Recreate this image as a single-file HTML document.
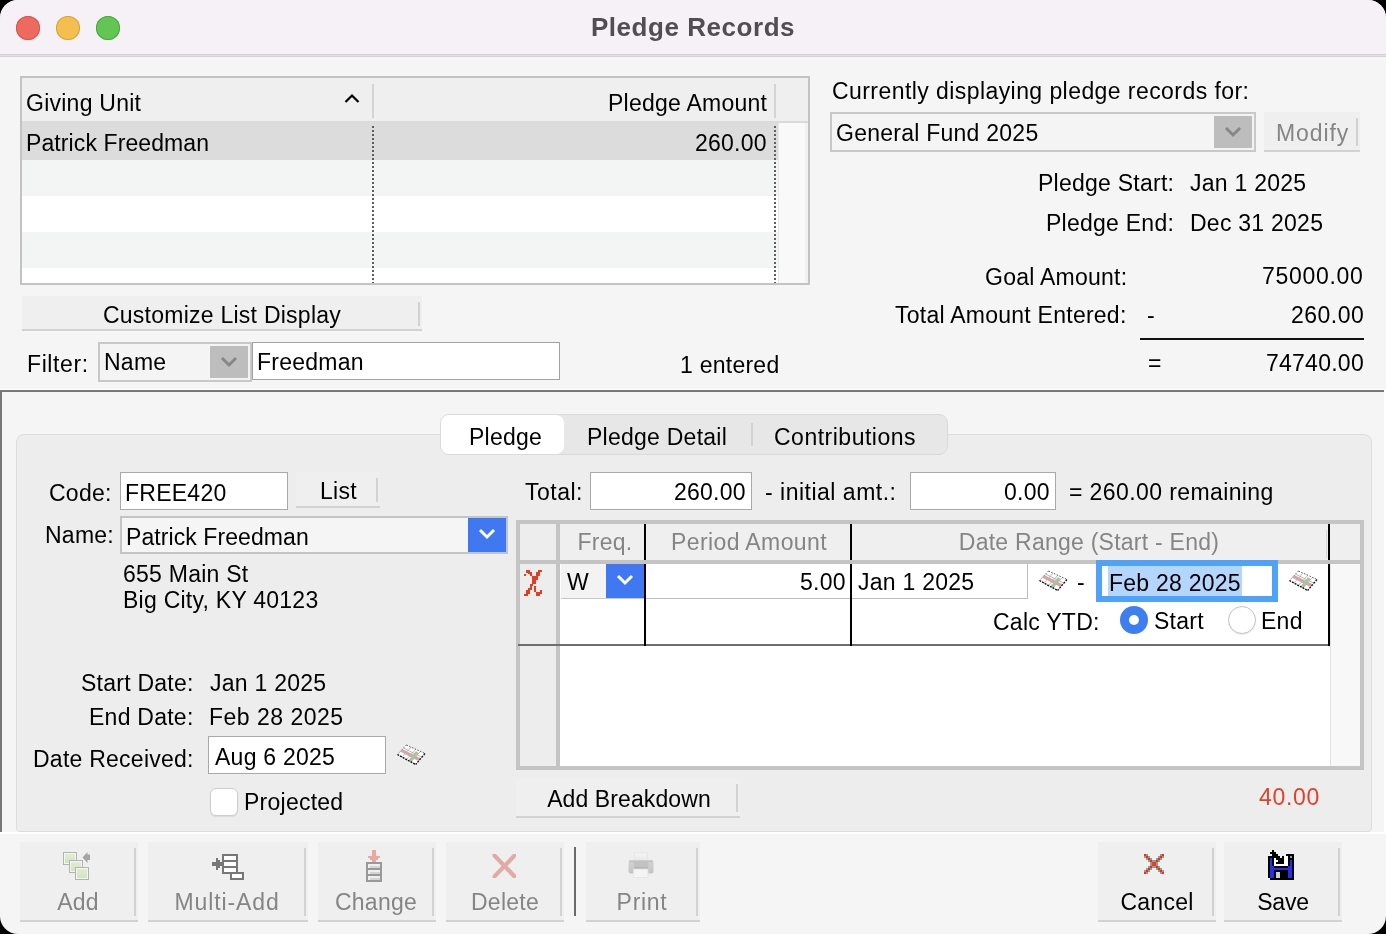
<!DOCTYPE html>
<html><head><meta charset="utf-8">
<style>
html,body{margin:0;padding:0;background:#000;}
body{width:1386px;height:934px;overflow:hidden;position:relative;}
#win{position:absolute;left:0;top:0;width:1386px;height:934px;border-radius:18px;overflow:hidden;background:#f5f5f5;}
.a{position:absolute;box-sizing:border-box;}
.t{position:absolute;font:23px/21px "Liberation Sans",sans-serif;letter-spacing:0.25px;white-space:nowrap;color:#000;will-change:transform;}
.r{text-align:right;}
.c{text-align:center;}
.g{color:#858585;}
.btn{position:absolute;box-sizing:border-box;background:#efefef;border-bottom:2px solid #d2d2d2;}
.btn .ln{position:absolute;right:2px;width:2px;background:#d2d2d2;}
.inp{position:absolute;box-sizing:border-box;background:#fff;border:1px solid #a9a9a9;}
</style></head>
<body>
<div id="win">
  <!-- title bar -->
  <div class="a" style="left:0;top:0;width:1386px;height:54px;background:#f6f1f7;"></div>
  <div class="a" style="left:0;top:54px;width:1386px;height:1px;background:#d3ced4;"></div><div class="a" style="left:0;top:55px;width:1386px;height:1px;background:#e4e0e5;"></div><div class="a" style="left:0;top:56px;width:1386px;height:1px;background:#d4d4d4;"></div>
  <div class="a" style="left:16px;top:16px;width:24px;height:24px;border-radius:50%;background:#ee6a5f;box-shadow:inset 0 0 0 1px #d8554a;"></div>
  <div class="a" style="left:56px;top:16px;width:24px;height:24px;border-radius:50%;background:#f5bf4f;box-shadow:inset 0 0 0 1px #d9a23a;"></div>
  <div class="a" style="left:96px;top:16px;width:24px;height:24px;border-radius:50%;background:#62c655;box-shadow:inset 0 0 0 1px #4aa83e;"></div>
  <div class="t c" style="left:493px;width:400px;top:14px;font:bold 26px/26px 'Liberation Sans',sans-serif;letter-spacing:0.55px;color:#504e50;">Pledge Records</div>

  <!-- top list -->
  <div class="a" style="left:20px;top:76px;width:790px;height:209px;border:2px solid #c3c3c3;background:#fff;"></div>
  <div class="a" style="left:22px;top:78px;width:786px;height:44px;background:#efefef;"></div>
  <div class="a" style="left:22px;top:121px;width:786px;height:2px;background:#dadada;"></div>
  <div class="a" style="left:22px;top:123px;width:756px;height:37px;background:#dcdcdc;"></div>
  <div class="a" style="left:22px;top:160px;width:756px;height:36px;background:#f3f4f4;"></div>
  <div class="a" style="left:22px;top:232px;width:756px;height:36px;background:#f3f4f4;"></div>
  <div class="a" style="left:778px;top:123px;width:30px;height:160px;background:#f9f9f9;border-left:1px solid #e8e8e8;"></div><div class="a" style="left:805px;top:123px;width:3px;height:160px;background:#f1f1f1;"></div>
  <div class="a" style="left:372px;top:84px;width:2px;height:34px;background:#d4d4d4;"></div>
  <div class="a" style="left:774px;top:84px;width:2px;height:34px;background:#d4d4d4;"></div>
  <div class="a" style="left:372px;top:126px;width:2px;height:157px;background:repeating-linear-gradient(to bottom,#5e5e5e 0 2px,transparent 2px 4px);"></div>
  <div class="a" style="left:774px;top:126px;width:2px;height:157px;background:repeating-linear-gradient(to bottom,#5e5e5e 0 2px,transparent 2px 4px);"></div>
  <svg class="a" style="left:343px;top:92px" width="18" height="12"><polyline points="2.5,10 9,3.5 15.5,10" fill="none" stroke="#000" stroke-width="2.2"/></svg>
  <div class="t" style="left:26px;top:93px;">Giving Unit</div>
  <div class="t r" style="right:619px;top:93px;">Pledge Amount</div>
  <div class="t" style="left:25.5px;top:133px;letter-spacing:0.1px;">Patrick Freedman</div>
  <div class="t r" style="right:619px;top:133px;">260.00</div>

  <!-- customize button -->
  <div class="btn" style="left:22px;top:296px;width:400px;height:35px;"><div class="ln" style="top:6px;height:24px;"></div></div>
  <div class="t c" style="left:22px;width:400px;top:305px;">Customize List Display</div>

  <!-- filter -->
  <div class="t" style="left:27px;top:354px;letter-spacing:0.6px;">Filter:</div>
  <div class="a" style="left:98px;top:342px;width:154px;height:40px;border:2px solid #c8c8c8;background:#f4f4f4;"></div>
  <div class="a" style="left:210px;top:346px;width:38px;height:32px;background:#bdbdbd;"></div>
  <svg class="a" style="left:219px;top:355px" width="20" height="14"><polyline points="3,3 10,10 17,3" fill="none" stroke="#878787" stroke-width="3"/></svg>
  <div class="t" style="left:104px;top:352px;">Name</div>
  <div class="inp" style="left:252px;top:342px;width:308px;height:38px;border:1px solid #a2a2a2;"></div>
  <div class="t" style="left:257px;top:352px;">Freedman</div>
  <div class="t" style="left:680px;top:355px;">1 entered</div>

  <!-- right top -->
  <div class="t" style="left:832px;top:81px;letter-spacing:0.43px;">Currently displaying pledge records for:</div>
  <div class="a" style="left:830px;top:112px;width:426px;height:40px;border:2px solid #c8c8c8;background:#f4f4f4;"></div>
  <div class="a" style="left:1214px;top:116px;width:38px;height:32px;background:#bdbdbd;"></div>
  <svg class="a" style="left:1223px;top:125px" width="20" height="14"><polyline points="3,3 10,10 17,3" fill="none" stroke="#878787" stroke-width="3"/></svg>
  <div class="t" style="left:836px;top:123px;">General Fund 2025</div>
  <div class="btn" style="left:1264px;top:112px;width:96px;height:40px;"><div class="ln" style="top:6px;height:28px;"></div></div>
  <div class="t g" style="left:1276px;top:123px;letter-spacing:0.9px;">Modify</div>
  <div class="t r" style="right:212px;top:173px;">Pledge Start:</div>
  <div class="t" style="left:1190px;top:173px;">Jan 1 2025</div>
  <div class="t r" style="right:212px;top:213px;">Pledge End:</div>
  <div class="t" style="left:1189.5px;top:213px;">Dec 31 2025</div>
  <div class="t r" style="right:259px;top:267px;">Goal Amount:</div>
  <div class="t r" style="right:22px;top:266px;letter-spacing:0.7px;">75000.00</div>
  <div class="t r" style="right:259px;top:305px;">Total Amount Entered:</div>
  <div class="t" style="left:1147px;top:305px;">-</div>
  <div class="t r" style="right:22px;top:305px;letter-spacing:0.5px;">260.00</div>
  <div class="a" style="left:1140px;top:338px;width:224px;height:2px;background:#111;"></div>
  <div class="t" style="left:1148px;top:353px;">=</div>
  <div class="t r" style="right:22px;top:353px;">74740.00</div>

  <!-- lower sunken frame -->
  <div class="a" style="left:0;top:389px;width:1386px;height:1px;background:#fff;"></div>
  <div class="a" style="left:0;top:390px;width:1384px;height:2px;background:#777;"></div>
  <div class="a" style="left:0;top:390px;width:2px;height:442px;background:#777;"></div>
  <div class="a" style="left:0;top:832px;width:1386px;height:2px;background:#fff;"></div>
  <div class="a" style="left:1384px;top:390px;width:2px;height:444px;background:#fff;"></div>

  <!-- panel -->
  <div class="a" style="left:16px;top:434px;width:1356px;height:398px;background:#ededed;border:1px solid #dcdcdc;border-radius:8px 8px 4px 4px;"></div>

  <!-- segmented -->
  <div class="a" style="left:440px;top:414px;width:508px;height:41px;background:#e7e7e7;border:1px solid #dadada;border-radius:9px;"></div>
  <div class="a" style="left:441px;top:415px;width:123px;height:39px;background:#fff;border-radius:8px;"></div>
  <div class="a" style="left:751px;top:423px;width:2px;height:23px;background:#d2d2d2;"></div>
  <div class="t" style="left:469px;top:427px;">Pledge</div>
  <div class="t" style="left:586.5px;top:427px;">Pledge Detail</div>
  <div class="t" style="left:774px;top:427px;letter-spacing:0.5px;">Contributions</div>

  <!-- left fields -->
  <div class="t r" style="right:1274px;top:483px;">Code:</div>
  <div class="inp" style="left:120px;top:472px;width:168px;height:38px;"></div>
  <div class="t" style="left:125px;top:483px;">FREE420</div>
  <div class="btn" style="left:296px;top:472px;width:84px;height:36px;"><div class="ln" style="top:6px;height:24px;"></div></div>
  <div class="t" style="left:319.5px;top:481px;">List</div>
  <div class="t r" style="right:1272px;top:525px;">Name:</div>
  <div class="a" style="left:120px;top:516px;width:388px;height:38px;border:2px solid #c4c4c4;background:#f5f5f5;"></div>
  <div class="a" style="left:468px;top:518px;width:38px;height:34px;background:#3f78f0;"></div>
  <svg class="a" style="left:477px;top:527px" width="20" height="14"><polyline points="3,3 10,10 17,3" fill="none" stroke="#fff" stroke-width="3"/></svg>
  <div class="t" style="left:125.5px;top:527px;letter-spacing:0.08px;">Patrick Freedman</div>
  <div class="t" style="left:122.5px;top:564px;">655 Main St</div>
  <div class="t" style="left:122.5px;top:590px;">Big City, KY 40123</div>

  <div class="t r" style="right:1192px;top:673px;">Start Date:</div>
  <div class="t" style="left:209.5px;top:673px;">Jan 1 2025</div>
  <div class="t r" style="right:1192px;top:707px;">End Date:</div>
  <div class="t" style="left:208.5px;top:707px;letter-spacing:0.5px;">Feb 28 2025</div>
  <div class="t r" style="right:1192px;top:749px;">Date Received:</div>
  <div class="inp" style="left:208px;top:736px;width:178px;height:38px;"></div>
  <div class="t" style="left:215px;top:747px;">Aug 6 2025</div>
  <div class="a" id="cal1" style="left:397px;top:744px;width:28px;height:20px;"></div>
  <div class="a" style="left:210px;top:788px;width:28px;height:28px;border-radius:6px;background:#fff;border:1px solid #cdcdcd;box-shadow:0 1px 1px rgba(0,0,0,0.08);"></div>
  <div class="t" style="left:244px;top:792px;">Projected</div>

  <!-- total row -->
  <div class="t" style="left:525px;top:482px;letter-spacing:0.5px;">Total:</div>
  <div class="inp" style="left:590px;top:472px;width:162px;height:38px;"></div>
  <div class="t r" style="right:640px;top:482px;">260.00</div>
  <div class="t" style="left:764.5px;top:482px;letter-spacing:0.5px;">- initial amt.:</div>
  <div class="inp" style="left:910px;top:472px;width:146px;height:38px;"></div>
  <div class="t r" style="right:336px;top:482px;">0.00</div>
  <div class="t" style="left:1069px;top:482px;letter-spacing:0.4px;">= 260.00 remaining</div>

  <!-- grid -->
  <div class="a" style="left:516px;top:520px;width:848px;height:250px;border:4px solid #c4c4c4;background:#fff;"></div>
  <div class="a" style="left:520px;top:524px;width:36px;height:242px;background:#ededed;"></div>
  <div class="a" style="left:556px;top:524px;width:4px;height:242px;background:#c4c4c4;"></div>
  <div class="a" style="left:560px;top:524px;width:800px;height:36px;background:#efefef;"></div>
  
  <div class="a" style="left:1330px;top:564px;width:30px;height:202px;background:#f8f8f8;border-left:1px solid #e2e2e2;"></div>
  <div class="a" style="left:1326px;top:530px;width:1px;height:28px;background:#d8d8d8;"></div>
  <div class="a" style="left:518px;top:644px;width:812px;height:2px;background:#6e6e6e;"></div>
  <div class="a" style="left:644px;top:524px;width:2px;height:122px;background:#000;"></div>
  <div class="a" style="left:850px;top:524px;width:2px;height:122px;background:#000;"></div>
  <div class="a" style="left:1328px;top:524px;width:2px;height:122px;background:#000;"></div>
  <div class="a" style="left:520px;top:560px;width:840px;height:4px;background:#c4c4c4;"></div>
  <div class="t c g" style="left:562.6px;width:84px;top:532px;">Freq.</div>
  <div class="t c g" style="left:646.8px;width:204px;top:532px;letter-spacing:0.4px;">Period Amount</div>
  <div class="t c g" style="left:851px;width:476px;top:532px;">Date Range (Start - End)</div>

  <div class="a" style="left:561px;top:564px;width:83px;height:35px;background:#f3f3f3;border-bottom:1px solid #c8c8c8;"></div>
  <div class="a" style="left:606px;top:564px;width:38px;height:34px;background:#3f78f0;"></div>
  <svg class="a" style="left:615px;top:573px" width="20" height="14"><polyline points="3,3 10,10 17,3" fill="none" stroke="#fff" stroke-width="3"/></svg>
  <div class="t" style="left:567px;top:572px;">W</div>
  <div class="a" style="left:646px;top:564px;width:204px;height:35px;border-bottom:1px solid #bdbdbd;"></div>
  <div class="t r" style="right:540px;top:572px;">5.00</div>
  <div class="a" style="left:852px;top:564px;width:176px;height:35px;border-bottom:1px solid #bdbdbd;border-right:1px solid #bdbdbd;"></div>
  <div class="t" style="left:857.5px;top:572px;">Jan 1 2025</div>
  <div class="a" id="cal2" style="left:1039px;top:571px;width:28px;height:20px;"></div>
  <div class="t" style="left:1077px;top:572px;">-</div>
  <div class="a" style="left:1096px;top:560px;width:182px;height:42px;border:6px solid #4fa2f7;background:#fff;"></div>
  <div class="a" style="left:1108px;top:566px;width:134px;height:30px;background:#b4d6fd;"></div>
  <div class="t" style="left:1109px;top:573px;">Feb 28 2025</div>
  <div class="a" id="cal3" style="left:1289px;top:571px;width:28px;height:20px;"></div>
  <div class="t r" style="right:286px;top:612px;">Calc YTD:</div>
  <div class="a" style="left:1120px;top:606px;width:28px;height:28px;border-radius:50%;background:#3d7ff0;"></div>
  <div class="a" style="left:1129px;top:615px;width:10px;height:10px;border-radius:50%;background:#fff;"></div>
  <div class="t" style="left:1154px;top:611px;">Start</div>
  <div class="a" style="left:1228px;top:606px;width:28px;height:28px;border-radius:50%;background:#fff;border:1px solid #c4c4c4;box-shadow:0 1px 1px rgba(0,0,0,0.08);"></div>
  <div class="t" style="left:1261px;top:611px;">End</div>

  <!-- add breakdown -->
  <div class="btn" style="left:516px;top:778px;width:224px;height:40px;"><div class="ln" style="top:6px;height:28px;"></div></div>
  <div class="t c" style="left:516.8px;width:224px;top:789px;letter-spacing:0.1px;">Add Breakdown</div>
  <div class="t" style="left:1258.5px;top:787px;color:#e2402a;letter-spacing:0.7px;">40.00</div>

  <!-- bottom toolbar -->
  <div class="btn" style="left:20px;top:842px;width:118px;height:80px;"><div class="ln" style="top:6px;height:68px;"></div></div>
  <div class="t c g" style="left:20px;width:116px;top:892px;">Add</div>
  <div class="btn" style="left:148px;top:842px;width:160px;height:80px;"><div class="ln" style="top:6px;height:68px;"></div></div>
  <div class="t c g" style="left:148px;width:158px;top:892px;letter-spacing:0.9px;">Multi-Add</div>
  <div class="btn" style="left:318px;top:842px;width:118px;height:80px;"><div class="ln" style="top:6px;height:68px;"></div></div>
  <div class="t c g" style="left:318px;width:116px;top:892px;">Change</div>
  <div class="btn" style="left:446px;top:842px;width:118px;height:80px;"><div class="ln" style="top:6px;height:68px;"></div></div>
  <div class="t c g" style="left:446px;width:118px;top:892px;">Delete</div>
  <div class="a" style="left:574px;top:847px;width:2px;height:69px;background:#6a6a6a;"></div>
  <div class="btn" style="left:586px;top:842px;width:114px;height:80px;"><div class="ln" style="top:6px;height:68px;"></div></div>
  <div class="t c g" style="left:586px;width:112px;top:892px;letter-spacing:0.7px;">Print</div>
  <div class="btn" style="left:1098px;top:842px;width:118px;height:80px;"><div class="ln" style="top:6px;height:68px;"></div></div>
  <div class="t c" style="left:1098px;width:118px;top:892px;">Cancel</div>
  <div class="btn" style="left:1224px;top:842px;width:118px;height:80px;"><div class="ln" style="top:6px;height:68px;"></div></div>
  <div class="t c" style="left:1224px;width:118px;top:892px;letter-spacing:-0.2px;">Save</div>
<!--ICONS--><svg class="a" style="left:0;top:0;pointer-events:none" width="1386" height="934" viewBox="0 0 1386 934">
<g fill="#e63b22" shape-rendering="crispEdges"><rect x="524" y="574" width="2" height="2"/><rect x="526" y="570" width="4" height="3"/><rect x="528" y="572" width="4" height="2"/><rect x="530" y="572" width="2" height="4"/><rect x="538" y="570" width="4" height="2"/><rect x="536" y="572" width="4" height="4"/><rect x="532" y="576" width="6" height="4"/><rect x="532" y="580" width="4" height="4"/><rect x="530" y="584" width="3" height="2"/><rect x="530" y="584" width="2" height="6"/><rect x="528" y="588" width="4" height="2"/><rect x="526" y="590" width="4" height="4"/><rect x="524" y="594" width="4" height="2"/><rect x="534" y="586" width="2" height="6"/><rect x="536" y="592" width="4" height="4"/><rect x="540" y="590" width="2" height="4"/></g>
<polygon points="1039.4,580.5 1048.5,571 1067,579.5 1057.6,590.5" fill="#fff"/><line x1="1053.12" y1="573.12" x2="1043.95" y2="583.00" stroke="#aaa" stroke-width="0.8"/><line x1="1057.75" y1="575.25" x2="1048.50" y2="585.50" stroke="#aaa" stroke-width="0.8"/><line x1="1062.38" y1="577.38" x2="1053.05" y2="588.00" stroke="#aaa" stroke-width="0.8"/><line x1="1045.50" y1="574.13" x2="1063.90" y2="583.13" stroke="#aaa" stroke-width="0.8"/><line x1="1042.49" y1="577.27" x2="1060.80" y2="586.76" stroke="#aaa" stroke-width="0.8"/><line x1="1043.50" y1="576.23" x2="1061.83" y2="585.55" stroke="#dba3a5" stroke-width="3"/><line x1="1059.20" y1="578.00" x2="1051.80" y2="587.00" stroke="#a6c69c" stroke-width="3"/><line x1="1039.40" y1="580.50" x2="1057.60" y2="590.50" stroke="#111" stroke-width="1.4" stroke-dasharray="2 1"/><line x1="1067.00" y1="579.50" x2="1057.60" y2="590.50" stroke="#111" stroke-width="1.3" stroke-dasharray="2 1.2"/><line x1="1048.50" y1="571.00" x2="1039.40" y2="580.50" stroke="#666" stroke-width="1" stroke-dasharray="1.5 1.5"/><line x1="1048.50" y1="571.00" x2="1067.00" y2="579.50" stroke="#555" stroke-width="1" stroke-dasharray="1.5 1.5"/><polygon points="1289.4,580.5 1298.5,571 1317,579.5 1307.6,590.5" fill="#fff"/><line x1="1303.12" y1="573.12" x2="1293.95" y2="583.00" stroke="#aaa" stroke-width="0.8"/><line x1="1307.75" y1="575.25" x2="1298.50" y2="585.50" stroke="#aaa" stroke-width="0.8"/><line x1="1312.38" y1="577.38" x2="1303.05" y2="588.00" stroke="#aaa" stroke-width="0.8"/><line x1="1295.50" y1="574.13" x2="1313.90" y2="583.13" stroke="#aaa" stroke-width="0.8"/><line x1="1292.49" y1="577.27" x2="1310.80" y2="586.76" stroke="#aaa" stroke-width="0.8"/><line x1="1293.50" y1="576.23" x2="1311.83" y2="585.55" stroke="#dba3a5" stroke-width="3"/><line x1="1309.20" y1="578.00" x2="1301.80" y2="587.00" stroke="#a6c69c" stroke-width="3"/><line x1="1289.40" y1="580.50" x2="1307.60" y2="590.50" stroke="#111" stroke-width="1.4" stroke-dasharray="2 1"/><line x1="1317.00" y1="579.50" x2="1307.60" y2="590.50" stroke="#111" stroke-width="1.3" stroke-dasharray="2 1.2"/><line x1="1298.50" y1="571.00" x2="1289.40" y2="580.50" stroke="#666" stroke-width="1" stroke-dasharray="1.5 1.5"/><line x1="1298.50" y1="571.00" x2="1317.00" y2="579.50" stroke="#555" stroke-width="1" stroke-dasharray="1.5 1.5"/><polygon points="397.4,754.5 406.5,745 425,753.5 415.6,764.5" fill="#fff"/><line x1="411.12" y1="747.12" x2="401.95" y2="757.00" stroke="#aaa" stroke-width="0.8"/><line x1="415.75" y1="749.25" x2="406.50" y2="759.50" stroke="#aaa" stroke-width="0.8"/><line x1="420.38" y1="751.38" x2="411.05" y2="762.00" stroke="#aaa" stroke-width="0.8"/><line x1="403.50" y1="748.13" x2="421.90" y2="757.13" stroke="#aaa" stroke-width="0.8"/><line x1="400.49" y1="751.27" x2="418.80" y2="760.76" stroke="#aaa" stroke-width="0.8"/><line x1="401.50" y1="750.23" x2="419.83" y2="759.55" stroke="#dba3a5" stroke-width="3"/><line x1="417.20" y1="752.00" x2="409.80" y2="761.00" stroke="#a6c69c" stroke-width="3"/><line x1="397.40" y1="754.50" x2="415.60" y2="764.50" stroke="#111" stroke-width="1.4" stroke-dasharray="2 1"/><line x1="425.00" y1="753.50" x2="415.60" y2="764.50" stroke="#111" stroke-width="1.3" stroke-dasharray="2 1.2"/><line x1="406.50" y1="745.00" x2="397.40" y2="754.50" stroke="#666" stroke-width="1" stroke-dasharray="1.5 1.5"/><line x1="406.50" y1="745.00" x2="425.00" y2="753.50" stroke="#555" stroke-width="1" stroke-dasharray="1.5 1.5"/>
<defs><linearGradient id="gg" x1="0" y1="0" x2="0" y2="1"><stop offset="0" stop-color="#e2edd3"/><stop offset="1" stop-color="#d3e2c0"/></linearGradient><clipPath id="dclip"><rect x="492.5" y="854" width="23.5" height="24"/></clipPath></defs>
<!-- add icon -->
<rect x="63.5" y="852.5" width="13" height="12" fill="#dde9cc" stroke="#b2b2b2" stroke-width="1"/><rect x="64.5" y="853.5" width="11" height="10" fill="url(#gg)" stroke="#f3f7ec" stroke-width="1"/><rect x="69.5" y="860.5" width="13" height="12" fill="#dde9cc" stroke="#b2b2b2" stroke-width="1"/><rect x="70.5" y="861.5" width="11" height="10" fill="url(#gg)" stroke="#f3f7ec" stroke-width="1"/><rect x="75.5" y="867.5" width="13" height="12" fill="#dde9cc" stroke="#b2b2b2" stroke-width="1"/><rect x="76.5" y="868.5" width="11" height="10" fill="url(#gg)" stroke="#f3f7ec" stroke-width="1"/>
<path d="M82.5,857.5 L87.5,852 L87.5,854.5 L90,854.5 L90,860 L87.5,860 L87.5,863 Z" fill="#a5a5a5"/>
<!-- multi-add -->
<g fill="#fdfdfd" stroke="#777" stroke-width="2" shape-rendering="crispEdges">
<rect x="223" y="855" width="14" height="18"/>
<line x1="223" y1="861" x2="237" y2="861"/>
<line x1="223" y1="867" x2="237" y2="867"/>
<rect x="231" y="873" width="12" height="6"/>
</g>
<path d="M212,862 H216 V858 H218 V860 H220 V862 H222 V866 H220 V868 H218 V870 H216 V866 H212 Z" fill="#777" shape-rendering="crispEdges"/>
<!-- change -->
<path d="M372,850 H376 V856 H380 V858 H378 V860 H376 V862 H372 V860 H370 V858 H368 V856 H372 Z" fill="#eba7a0" shape-rendering="crispEdges"/>
<g fill="none" stroke="#999" stroke-width="2" shape-rendering="crispEdges">
<rect x="367" y="863" width="14" height="18"/>
<line x1="367" y1="869" x2="381" y2="869"/>
<line x1="367" y1="875" x2="381" y2="875"/>
</g>
<g fill="#d4d4d4" shape-rendering="crispEdges">
<rect x="370" y="866" width="10" height="2"/><rect x="370" y="872" width="10" height="2"/><rect x="370" y="878" width="10" height="2"/>
</g>
<!-- delete -->
<g stroke="#e2aaa4" stroke-width="4.2" stroke-linecap="square" clip-path="url(#dclip)">
<line x1="493" y1="854" x2="516" y2="878"/>
<line x1="516" y1="854" x2="493" y2="878"/>
</g>
<!-- print -->
<defs><linearGradient id="pg" x1="0" y1="0" x2="0" y2="1"><stop offset="0" stop-color="#f6f6f6"/><stop offset="1" stop-color="#e6e6e6"/></linearGradient>
<linearGradient id="pb" x1="0" y1="0" x2="0" y2="1"><stop offset="0" stop-color="#d2d2d2"/><stop offset="1" stop-color="#c4c4c4"/></linearGradient></defs>
<rect x="634.5" y="853" width="13" height="8.5" fill="url(#pg)" stroke="#e4e4e4" stroke-width="0.8"/>
<rect x="628.5" y="860.5" width="25" height="13" rx="2.5" fill="url(#pb)"/>
<rect x="629" y="860.5" width="24" height="1.2" fill="#bdbdbd"/>
<rect x="634" y="861.5" width="14" height="6.5" fill="#c2c2c2"/>
<rect x="634" y="867.5" width="14" height="1.2" fill="#a9a9a9"/>
<rect x="633.5" y="869" width="14.5" height="8.5" fill="#f4f4f4" stroke="#e2e2e2" stroke-width="0.8"/>
<!-- cancel -->
<g shape-rendering="crispEdges"><rect x="1146" y="854" width="2" height="2" fill="#8a9ea2"/><rect x="1144" y="856" width="2" height="2" fill="#8a9ea2"/><rect x="1148" y="856" width="2" height="2" fill="#8a9ea2"/><rect x="1146" y="858" width="2" height="2" fill="#8a9ea2"/><rect x="1150" y="858" width="2" height="2" fill="#8a9ea2"/><rect x="1148" y="860" width="2" height="2" fill="#8a9ea2"/><rect x="1160" y="854" width="2" height="2" fill="#8a9ea2"/><rect x="1162" y="856" width="2" height="2" fill="#8a9ea2"/><rect x="1158" y="856" width="2" height="2" fill="#8a9ea2"/><rect x="1160" y="858" width="2" height="2" fill="#8a9ea2"/><rect x="1156" y="858" width="2" height="2" fill="#8a9ea2"/><rect x="1158" y="860" width="2" height="2" fill="#8a9ea2"/><rect x="1152" y="860" width="2" height="2" fill="#8a9ea2"/><rect x="1154" y="860" width="2" height="2" fill="#8a9ea2"/><rect x="1150" y="862" width="2" height="2" fill="#8a9ea2"/><rect x="1150" y="864" width="2" height="2" fill="#8a9ea2"/><rect x="1156" y="862" width="2" height="2" fill="#8a9ea2"/><rect x="1156" y="864" width="2" height="2" fill="#8a9ea2"/><rect x="1152" y="866" width="2" height="2" fill="#8a9ea2"/><rect x="1154" y="866" width="2" height="2" fill="#8a9ea2"/><rect x="1148" y="866" width="2" height="2" fill="#8a9ea2"/><rect x="1158" y="866" width="2" height="2" fill="#8a9ea2"/><rect x="1146" y="868" width="2" height="2" fill="#8a9ea2"/><rect x="1150" y="868" width="2" height="2" fill="#8a9ea2"/><rect x="1156" y="868" width="2" height="2" fill="#8a9ea2"/><rect x="1160" y="868" width="2" height="2" fill="#8a9ea2"/><rect x="1144" y="870" width="2" height="2" fill="#8a9ea2"/><rect x="1148" y="870" width="2" height="2" fill="#8a9ea2"/><rect x="1158" y="870" width="2" height="2" fill="#8a9ea2"/><rect x="1162" y="870" width="2" height="2" fill="#8a9ea2"/><rect x="1146" y="872" width="2" height="2" fill="#8a9ea2"/><rect x="1160" y="872" width="2" height="2" fill="#8a9ea2"/><rect x="1144" y="854" width="2" height="2" fill="#ff2a00"/><rect x="1146" y="856" width="2" height="2" fill="#ff2a00"/><rect x="1148" y="858" width="2" height="2" fill="#ff2a00"/><rect x="1150" y="860" width="2" height="2" fill="#ff2a00"/><rect x="1162" y="854" width="2" height="2" fill="#ff2a00"/><rect x="1160" y="856" width="2" height="2" fill="#ff2a00"/><rect x="1158" y="858" width="2" height="2" fill="#ff2a00"/><rect x="1156" y="860" width="2" height="2" fill="#ff2a00"/><rect x="1150" y="866" width="2" height="2" fill="#ff2a00"/><rect x="1148" y="868" width="2" height="2" fill="#ff2a00"/><rect x="1146" y="870" width="2" height="2" fill="#ff2a00"/><rect x="1144" y="872" width="2" height="2" fill="#ff2a00"/><rect x="1156" y="866" width="2" height="2" fill="#ff2a00"/><rect x="1158" y="868" width="2" height="2" fill="#ff2a00"/><rect x="1160" y="870" width="2" height="2" fill="#ff2a00"/><rect x="1162" y="872" width="2" height="2" fill="#ff2a00"/><rect x="1152" y="862" width="4" height="4" fill="#f03a1a"/></g>
<!-- save -->
<g shape-rendering="crispEdges">
<rect x="1268" y="856" width="26" height="24" fill="#000"/>
<rect x="1270" y="858" width="4" height="20" fill="#2a2ee0"/>
<rect x="1288" y="860" width="4" height="18" fill="#2a2ee0"/>
<rect x="1270" y="868" width="22" height="2" fill="#2a2ee0"/>
<rect x="1272" y="858" width="2" height="8" fill="#000"/>
<rect x="1288" y="858" width="2" height="8" fill="#000"/>
<rect x="1274" y="856" width="14" height="10" fill="#fff"/>
<rect x="1276" y="872" width="4" height="6" fill="#cfcfcf"/>
<rect x="1268" y="878" width="2" height="2" fill="#f0f0f0"/>
<rect x="1274" y="854" width="12" height="2" fill="#f0f0f0"/>
<rect x="1286" y="854" width="8" height="2" fill="#000"/>
<rect x="1290" y="856" width="2" height="2" fill="#999"/>
<path d="M1272,850 H1274 V852 H1276 V854 H1278 V856 H1280 V858 H1282 V856 H1284 V864 H1276 V862 H1278 V860 H1276 V858 H1274 V856 H1272 V854 H1270 V852 H1272 Z" fill="#000"/>
</g>
</svg><!--/ICONS-->
</div>
</body></html>
